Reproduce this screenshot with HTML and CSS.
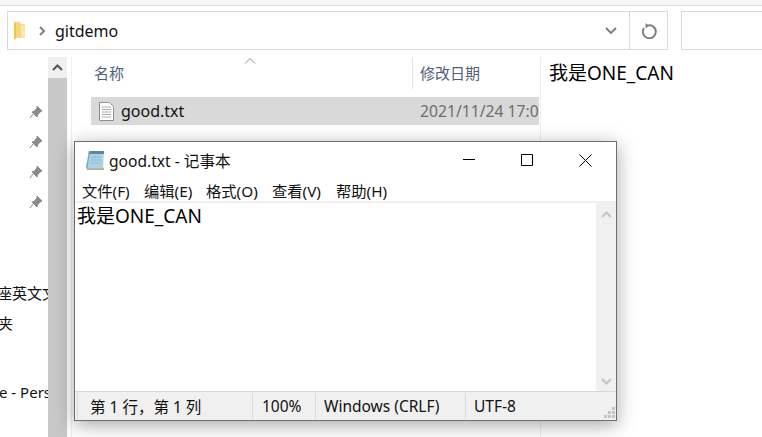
FILE: index.html
```html
<!DOCTYPE html>
<html lang="zh-CN">
<head>
<meta charset="utf-8">
<title>gitdemo</title>
<link rel="stylesheet" href="styles.css">
</head>
<body>
<div class="explorer">
  <div class="ribbon-edge"></div>
  <div class="address-row">
    <div class="address">
      <svg class="folder" width="14" height="18" viewBox="0 0 14 18"><path d="M1 0h6l1 2h4v14H3l-2 2z" fill="#f6d77e"/><path d="M1 0v18l2-2V2z" fill="#f2c24f"/><path d="M8 3h4v13H8z" fill="#fbe6a6"/></svg>
      <svg class="crumb" width="7" height="10" viewBox="0 0 7 10"><path d="M1 1l4 4-4 4" fill="none" stroke="#808080" stroke-width="2"/></svg>
      <span class="path">gitdemo</span>
      <svg class="drop" width="12" height="8" viewBox="0 0 12 8"><path d="M1 1l5 5 5-5" fill="none" stroke="#7a7a7a" stroke-width="1.8"/></svg>
      <div class="refresh">
        <svg width="16" height="16" viewBox="0 0 16 16"><path d="M5.200 2.600A6.500 6.500 0 1 1 2 5" fill="none" stroke="#808080" stroke-width="2"/><path d="M3.500 0l3.500 2.800-3.500 2.700z" fill="#808080"/></svg>
      </div>
    </div>
    <div class="search"></div>
  </div>
  <div class="body">
    <div class="nav">
      <div class="nav-row"><svg class="pin" width="14" height="14" viewBox="0 0 14 14"><path d="M8 1l5 5-2 1-2.500 3-.5 2-5-5 2-.500L8 3z M4 9L1 13" fill="#8a8a8a" stroke="#8a8a8a"/></svg></div>
      <div class="nav-row"><svg class="pin" width="14" height="14" viewBox="0 0 14 14"><path d="M8 1l5 5-2 1-2.500 3-.5 2-5-5 2-.500L8 3z M4 9L1 13" fill="#8a8a8a" stroke="#8a8a8a"/></svg></div>
      <div class="nav-row"><svg class="pin" width="14" height="14" viewBox="0 0 14 14"><path d="M8 1l5 5-2 1-2.500 3-.5 2-5-5 2-.500L8 3z M4 9L1 13" fill="#8a8a8a" stroke="#8a8a8a"/></svg></div>
      <div class="nav-row"><svg class="pin" width="14" height="14" viewBox="0 0 14 14"><path d="M8 1l5 5-2 1-2.500 3-.5 2-5-5 2-.500L8 3z M4 9L1 13" fill="#8a8a8a" stroke="#8a8a8a"/></svg></div>
      <div class="nav-gap"></div>
      <div class="nav-row nav-text"><span class="clip-a">座英文文</span></div>
      <div class="nav-row nav-text"><span class="clip-b">夹</span></div>
      <div class="nav-gap-small"></div>
      <div class="nav-row nav-text"><span class="clip-c">e - Personal</span></div>
    </div>
    <div class="scroll">
      <div class="scroll-up"><svg width="11" height="7" viewBox="0 0 11 7"><path d="M1 6l4.500-4.500L10 6" fill="none" stroke="#555" stroke-width="2"/></svg></div>
      <div class="scroll-thumb"></div>
    </div>
    <div class="files">
      <div class="sort"><svg width="12" height="6" viewBox="0 0 12 6"><path d="M1 5.500l5-5 5 5" fill="none" stroke="#8c8c8c"/></svg></div>
      <div class="head">
        <div class="col-name">名称</div>
        <div class="col-date">修改日期</div>
      </div>
      <div class="row">
        <svg class="doc" width="15" height="19" viewBox="0 0 15 19"><path d="M.5.500h10l4 4v14H.5z" fill="#fff" stroke="#8f8f8f"/><path d="M3 5h9M3 7.500h9M3 10h9M3 12.500h9M3 15h9" stroke="#a8a8a8"/></svg>
        <span class="fname">good.txt</span>
        <span class="fdate">2021/11/24 17:0</span>
      </div>
    </div>
    <div class="preview">我是ONE_CAN</div>
  </div>
</div>

<div class="notepad">
  <div class="titlebar">
    <svg class="np-icon" width="20" height="21" viewBox="0 0 20 21"><path d="M4 1h15l-1 17H1z" fill="#a9d3e2"/><path d="M4 1h15v3H3.500z" fill="#5c8796"/><path d="M1 18l3-17 1 0-2.500 17z" fill="#6fa9bd"/><path d="M1 18h17l1-1v3H2z" fill="#b9b2a0"/><path d="M6 7h10M6 10h10M5 13h10" stroke="#8dbccd"/></svg>
    <span class="np-title">good.txt - 记事本</span>
    <div class="controls">
      <svg class="ctl" width="12" height="12" viewBox="0 0 12 12"><path d="M0 5.500h12" stroke="#000"/></svg>
      <svg class="ctl" width="12" height="12" viewBox="0 0 12 12"><path d="M.5.500h11v11H.5z" fill="none" stroke="#000"/></svg>
      <svg class="ctl" width="13" height="13" viewBox="0 0 13 13"><path d="M.5.500l12 12M12.500.500l-12 12" stroke="#000"/></svg>
    </div>
  </div>
  <div class="menu">
    <span class="m1">文件(F)</span><span class="m2">编辑(E)</span><span class="m3">格式(O)</span><span class="m4">查看(V)</span><span class="m5">帮助(H)</span>
  </div>
  <div class="edit">
    <div class="text">我是ONE_CAN</div>
    <div class="np-scroll">
      <svg width="11" height="7" viewBox="0 0 11 7"><path d="M1 6l4.500-4.500L10 6" fill="none" stroke="#c4c4c4" stroke-width="2"/></svg>
      <svg width="11" height="7" viewBox="0 0 11 7"><path d="M1 1l4.500 4.500L10 1" fill="none" stroke="#c4c4c4" stroke-width="2"/></svg>
    </div>
  </div>
  <div class="status">
    <div class="s s1">第 1 行，第 1 列</div>
    <div class="s s2">100%</div>
    <div class="s s3">Windows (CRLF)</div>
    <div class="s s4">UTF-8</div>
    <svg class="grip" width="12" height="12" viewBox="0 0 12 12"><path d="M9 0h3v3H9zM5 4h3v3H5zM9 4h3v3H9zM1 8h3v3H1zM5 8h3v3H5zM9 8h3v3H9z" fill="#c4c4c4"/></svg>
  </div>
</div>
</body>
</html>
```
FILE: styles.css
```css
* { box-sizing: border-box; }
html, body { margin: 0; height: 100%; }
body {
  width: 762px;
  height: 437px;
  overflow: hidden;
  position: relative;
  background: #fff;
  color: #000;
  font-family: "Noto Sans", "Noto Sans CJK SC", sans-serif;
}
.explorer { display: flex; flex-direction: column; height: 437px; }
.ribbon-edge { height: 6px; background: #f5f6f7; border-bottom: 1px solid #dcdcdc; }
.address-row { display: flex; padding: 5px 0 0 7px; gap: 13px; height: 44px; }
.address {
  width: 661px; height: 39px;
  border: 1px solid #d9d9d9;
  display: flex; align-items: center;
  padding-left: 5px;
}
.crumb { margin-left: 12px; }
.path { margin-left: 9px; font-size: 16px; color: #111; }
.drop { margin-left: auto; margin-right: 12px; }
.refresh {
  width: 38px; height: 37px;
  border-left: 1px solid #d9d9d9;
  padding-left: 3px;
  display: flex; align-items: center; justify-content: center;
}
.search { flex: 1; height: 39px; border: 1px solid #d9d9d9; border-right: 0; }
.body { flex: 1; display: flex; padding-top: 7px; min-height: 0; }
.nav { width: 48px; padding-top: 40px; overflow: hidden; }
.nav-row { height: 30px; display: flex; align-items: center; justify-content: flex-end; padding-right: 5px; }
.nav-gap { height: 60px; }
.nav-gap-small { height: 40px; }
.nav-text { justify-content: flex-start; padding: 0; font-size: 15px; white-space: nowrap; color: #111; }
.clip-a { margin-left: -3px; }
.clip-b { margin-left: -2px; }
.clip-c { margin-left: -1px; }
.scroll { width: 19px; display: flex; flex-direction: column; }
.scroll-up { height: 21px; background: #f0f0f0; display: flex; align-items: center; justify-content: center; }
.scroll-thumb { flex: 1; background: #c8c8c8; }
.files { width: 470px; margin-left: 4px; border-left: 1px solid #f0f0f0; border-right: 1px solid #eeeeee; position: relative; padding-left: 19px; }
.sort { position: absolute; left: 172px; top: 1px; line-height: 0; }
.head { height: 32px; display: flex; align-items: center; font-size: 15px; color: #4c607a; }
.col-name { width: 321px; padding: 0 0 2px 3px; }
.col-date { height: 32px; border-left: 1px solid #e3e3e3; padding: 0 0 2px 7px; display: flex; align-items: center; white-space: nowrap; }
.row {
  margin-top: 8px; height: 28px; width: 448px;
  background: #d9d9d9;
  display: flex; align-items: center;
  padding-left: 8px;
  white-space: nowrap; overflow: hidden;
}
.doc { flex: none; }
.fname { margin-left: 7px; width: 299px; font-size: 16px; color: #111; flex: none; }
.fdate { font-size: 15.7px; color: #6d6d6d; flex: none; }
.preview { padding: 3px 0 0 8px; font-size: 19px; line-height: 26px; white-space: nowrap; }

.notepad {
  position: absolute;
  left: 74px; top: 141px;
  width: 543px; height: 280px;
  background: #fff;
  border: 1px solid #6e6e6e;
  box-shadow: 0 4px 18px rgba(0,0,0,.35);
  display: flex; flex-direction: column;
}
.titlebar { height: 36px; display: flex; align-items: center; padding-left: 10px; flex: none; }
.np-title { margin-left: 4px; font-size: 15.6px; color: #111; white-space: nowrap; }
.controls { margin-left: auto; display: flex; align-items: center; gap: 46px; padding-right: 24px; }
.menu { height: 25px; display: flex; align-items: center; font-size: 15.3px; color: #111; flex: none; border-bottom: 2px solid #f0f0f0; padding-left: 7px; white-space: nowrap; }
.m1 { width: 62px; }
.m2 { width: 62px; }
.m3 { width: 66px; }
.m4 { width: 64px; }
.edit { flex: 1; display: flex; min-height: 0; }
.text { flex: 1; padding-left: 2px; font-size: 19px; line-height: 26px; }
.np-scroll { width: 20px; background: #f0f0f0; display: flex; flex-direction: column; justify-content: space-between; align-items: center; padding: 8px 0 6px; }
.status {
  height: 29px; flex: none;
  background: #f0f0f0;
  border-top: 1px solid #d7d7d7;
  display: flex; align-items: center;
  font-size: 15.5px; color: #111;
  padding-left: 2px;
  position: relative;
}
.s { height: 26px; display: flex; align-items: center; border-left: 1px solid #dadada; white-space: nowrap; }
.s1 { width: 175px; padding-left: 12px; }
.s2 { width: 63px; padding-left: 9px; }
.s3 { width: 150px; padding-left: 8px; }
.s4 { padding-left: 8px; }
.grip { position: absolute; right: 1px; bottom: 1px; }
```
